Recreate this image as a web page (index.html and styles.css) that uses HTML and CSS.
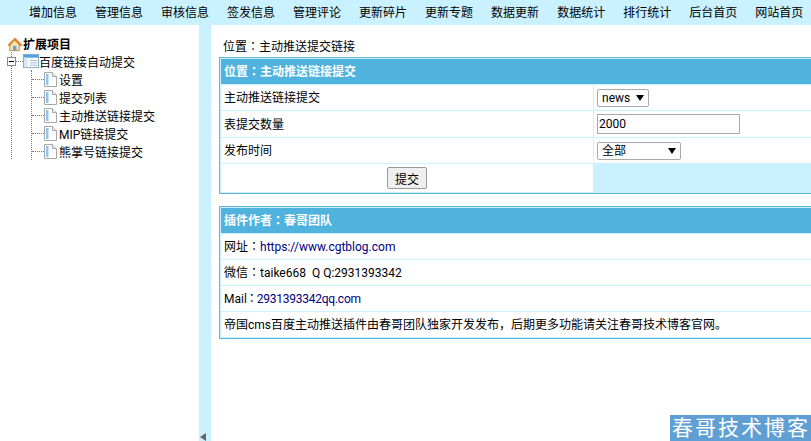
FILE: index.html
```html
<!DOCTYPE html>
<html lang="zh-CN">
<head>
  <meta charset="UTF-8">
  <title>百度链接自动提交</title>
  <link rel="stylesheet" href="styles.css">
</head>
<body>
  <div class="topnav">
    <a href="#">增加信息</a>
    <a href="#">管理信息</a>
    <a href="#">审核信息</a>
    <a href="#">签发信息</a>
    <a href="#">管理评论</a>
    <a href="#">更新碎片</a>
    <a href="#">更新专题</a>
    <a href="#">数据更新</a>
    <a href="#">数据统计</a>
    <a href="#">排行统计</a>
    <a href="#">后台首页</a>
    <a href="#">网站首页</a>
  </div>

  <div class="main">
    <div class="sidebar">
      <div class="tree-title">
        <svg class="icon-home" width="16" height="16" viewBox="0 0 17 16">
          <path d="M3 8v7h10V8L8 3z" fill="#f6e3b4" stroke="#c98a3a"/>
          <path d="M1 9l7.500-7.500L16 9l-1.500 1L8 4 2.500 10z" fill="#ee8a2a" stroke="#c8641a" stroke-width=".6"/>
          <rect x="6.500" y="10" width="3.500" height="5" fill="#6a9fd0"/>
        </svg>
        <b>扩展项目</b>
      </div>
      <ul class="tree">
        <li class="tree-root">
          <span class="toggle"></span>
          <span class="dash short"></span>
          <svg width="16" height="16" viewBox="0 0 17 17">
            <rect x=".5" y="1.500" width="16" height="14" fill="#fff" stroke="#7aa7cf"/>
            <rect x="1" y="2" width="15" height="3" fill="#4fa3e0"/>
            <rect x="1" y="5" width="4" height="10" fill="#d6e8f6"/>
            <path d="M7 8h8M7 10.500h8M7 13h8" stroke="#9bbcd8"/>
          </svg>
          <span>百度链接自动提交</span>
        </li>
        <li>
          <ul class="tree-sub">
            <li><span class="dash"></span><svg class="icon-page" width="13" height="15" viewBox="0 0 13 15"><path d="M.5.500h8l4 4v10H.5z" fill="#fff" stroke="#a8a8a8"/><path d="M2 2h2.500v11H2z" fill="#8ec5ec"/><path d="M8.500.500v4h4" fill="#eee" stroke="#a8a8a8"/></svg><span>设置</span></li>
            <li><span class="dash"></span><svg class="icon-page" width="13" height="15" viewBox="0 0 13 15"><path d="M.5.500h8l4 4v10H.5z" fill="#fff" stroke="#a8a8a8"/><path d="M2 2h2.500v11H2z" fill="#8ec5ec"/><path d="M8.500.500v4h4" fill="#eee" stroke="#a8a8a8"/></svg><span>提交列表</span></li>
            <li><span class="dash"></span><svg class="icon-page" width="13" height="15" viewBox="0 0 13 15"><path d="M.5.500h8l4 4v10H.5z" fill="#fff" stroke="#a8a8a8"/><path d="M2 2h2.500v11H2z" fill="#8ec5ec"/><path d="M8.500.500v4h4" fill="#eee" stroke="#a8a8a8"/></svg><span>主动推送链接提交</span></li>
            <li><span class="dash"></span><svg class="icon-page" width="13" height="15" viewBox="0 0 13 15"><path d="M.5.500h8l4 4v10H.5z" fill="#fff" stroke="#a8a8a8"/><path d="M2 2h2.500v11H2z" fill="#8ec5ec"/><path d="M8.500.500v4h4" fill="#eee" stroke="#a8a8a8"/></svg><span>MIP链接提交</span></li>
            <li><span class="dash"></span><svg class="icon-page" width="13" height="15" viewBox="0 0 13 15"><path d="M.5.500h8l4 4v10H.5z" fill="#fff" stroke="#a8a8a8"/><path d="M2 2h2.500v11H2z" fill="#8ec5ec"/><path d="M8.500.500v4h4" fill="#eee" stroke="#a8a8a8"/></svg><span>熊掌号链接提交</span></li>
          </ul>
        </li>
      </ul>
    </div>

    <div class="splitter"><span class="arrow"></span></div>

    <div class="content">
      <p class="crumb">位置<span class="colon" lang="zh-TW">：</span>主动推送提交链接</p>

      <table class="tb form-tb">
        <colgroup><col class="col-left"><col></colgroup>
        <tr><th colspan="2">位置<span class="colon" lang="zh-TW">：</span>主动推送链接提交</th></tr>
        <tr class="r1">
          <td>主动推送链接提交</td>
          <td class="col-r"><span class="sel-wrap"><select class="sel-news"><option>news</option></select></span></td>
        </tr>
        <tr class="r2">
          <td>表提交数量</td>
          <td class="col-r"><input class="num" type="text" value="2000"></td>
        </tr>
        <tr class="r3">
          <td>发布时间</td>
          <td class="col-r"><span class="sel-wrap"><select class="sel-time"><option>全部</option></select></span></td>
        </tr>
        <tr class="r4">
          <td class="center"><button type="button">提交</button></td>
          <td class="col-blue"></td>
        </tr>
      </table>

      <table class="tb info-tb">
        <tr><th>插件作者<span class="colon" lang="zh-TW">：</span>春哥团队</th></tr>
        <tr><td>网址<span class="colon" lang="zh-TW">：</span><a href="#">https://www.cgtblog.com</a></td></tr>
        <tr><td>微信<span class="colon" lang="zh-TW">：</span>taike668&nbsp;&nbsp;Q Q:2931393342</td></tr>
        <tr><td><span class="mail">Mail<span class="colon" lang="zh-TW">：</span><a href="#">2931393342qq.com</a></span></td></tr>
        <tr><td>帝国cms百度主动推送插件由春哥团队独家开发发布，后期更多功能请关注春哥技术博客官网。</td></tr>
      </table>
    </div>
  </div>

  <div class="watermark">春哥技术博客</div>
</body>
</html>
```

FILE: styles.css
```css
html, body { height: 100%; }
body { margin: 0; overflow: hidden; background: #fff; color: #000; font-family: Roboto, "Noto Sans CJK SC", sans-serif; font-size: 12px; }
a { color: #000; text-decoration: none; }
.colon { font-family: "Noto Sans CJK TC", sans-serif; }

.topnav { display: flex; gap: 18px; height: 25px; box-sizing: border-box; align-items: center; padding: 0 0 2px 29px; background: #c9f1ff; white-space: nowrap; overflow: hidden; }

.main { display: flex; height: 416px; }
.sidebar { width: 199px; padding-top: 10px; box-sizing: border-box; }
.splitter { position: relative; width: 12px; background: #c9f1ff; }
.arrow { position: absolute; left: 1px; bottom: 0; border-style: solid; border-width: 4px 6px 4px 0; border-color: transparent #666 transparent transparent; }

.tree-title { display: flex; align-items: center; height: 17px; padding-left: 7px; }
.tree-title b { font-weight: 700; }
.icon-home { flex: none; }

.tree, .tree-sub { list-style: none; margin: 0; padding: 0; }
.tree { margin-left: 11px; border-left: 1px dotted #777; height: 107px; }
.tree li { display: flex; align-items: center; }
.tree-root { height: 18px; margin-left: -5px; }
.toggle { position: relative; width: 9px; height: 9px; box-sizing: border-box; border: 1px solid #888; background: #fff; flex: none; }
.toggle::after { content: ""; position: absolute; left: 1px; top: 3px; width: 5px; height: 1px; background: #000; }
.dash { flex: none; width: 12px; border-top: 1px dotted #777; }
.dash.short { width: 7px; }
.tree-root svg { flex: none; }

.tree-sub { margin-left: 19px; border-left: 1px dotted #777; }
.tree-sub li { height: 18px; }
.icon-page { flex: none; margin-right: 2px; }

.content { flex: 1; min-width: 0; padding: 13px 0 0 8px; overflow: hidden; }
.crumb { margin: 0 0 3px; height: 16px; line-height: 16px; padding-left: 4px; }

.tb { border-collapse: separate; border-spacing: 1px 1px; border: 1px solid #5fb5d8; border-right: 0; background: #c9f1ff; width: calc(100% + 1px); table-layout: fixed; }
.tb th { height: 25px; box-sizing: border-box; padding: 0 0 2px 3px; background: #4fb3de; color: #fff; text-align: left; font-weight: 700; }
.tb td { background: #fff; height: 25px; box-sizing: border-box; padding: 0 0 2px 3px; }
.col-left { width: 372px; }
.form-tb .col-r { padding: 0 0 0 3px; }
.form-tb .r2 td { height: 26px; }
.form-tb .r4 td { height: 28px; padding: 0; }
.form-tb .center { text-align: center; }
.form-tb .col-blue { background: #c9f1ff; }

select, input, button { font-family: Roboto, "Noto Sans CJK SC", sans-serif; font-size: 12px; color: #000; box-sizing: border-box; margin: 0; vertical-align: middle; }
.sel-wrap { position: relative; display: inline-block; vertical-align: middle; height: 18px; }
.sel-wrap::after { content: ""; position: absolute; right: 5px; top: 6px; border-style: solid; border-width: 6px 4px 0; border-color: #000 transparent transparent; pointer-events: none; }
select { display: block; height: 18px; border: 1px solid #a9a9a9; border-radius: 2px; background: #fff; padding: 0 0 0 4px; appearance: none; -webkit-appearance: none; }
.sel-news { width: 52px; }
.sel-time { width: 84px; }
.num { width: 143px; height: 20px; border: 1px solid #a9a9a9; padding: 0 1px; }
button { width: 40px; height: 22px; border: 1px solid #999; border-radius: 2px; background: #efefef; padding: 0; }

.info-tb { margin-top: 12px; }
.info-tb a { color: #000080; }
.mail a { letter-spacing: -.25px; }
.mail .colon { margin-left: -1px; margin-right: -1px; }

.watermark { position: absolute; right: 0; bottom: 0; width: 141px; height: 26px; line-height: 26px; background: #609fd3; color: #fff; font-family: "Liberation Serif", "Noto Sans CJK SC", serif; font-size: 21px; letter-spacing: 2px; padding-left: 2px; box-sizing: border-box; white-space: nowrap; overflow: hidden; }
```
